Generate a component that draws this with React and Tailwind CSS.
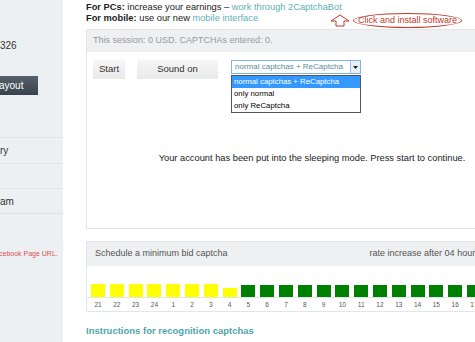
import React from 'react';

const hours = [21, 22, 23, 24, 1, 2, 3, 4, 5, 6, 7, 8, 9, 10, 11, 12, 13, 14, 15, 16, 17, 18, 19, 20];

const barFor = (h, idx) => {
  if (idx < 7) return 'h-[13px] bg-[#ffff00]';
  if (idx === 7) return 'h-[9px] bg-[#ffff00]';
  return 'h-[12px] bg-[#008000]';
};

const Sidebar = () => (
  <div className="w-[63px] shrink-0 h-[342px] bg-[#edf0f2] overflow-hidden text-[10px] text-[#333]">
    <div className="pt-[38px] h-[76px]">326</div>
    <div className="h-[19px] w-[38px] bg-gradient-to-b from-[#56616b] to-[#38424c] text-white flex items-center">
      <span className="-ml-[1px]">ayout</span>
    </div>
    <div className="h-[42px]" />
    <div className="border-t border-[#dfe3e6] h-[26px] flex items-center">ry</div>
    <div className="border-t border-[#dfe3e6] h-[25px]" />
    <div className="border-t border-[#dfe3e6] h-[25px] flex items-center">am</div>
    <div className="border-t border-[#dfe3e6] h-[36px]" />
    <div className="text-[7px] text-[#d9534f] -ml-[1px]">cebook Page URL.</div>
  </div>
);

const App = () => {
  return (
    <div className="w-[475px] h-[342px] overflow-hidden bg-white flex" style={{ fontFamily: '"Liberation Sans", Arial, sans-serif' }}>
      <Sidebar />
      <div className="ml-[23px] w-[452px] shrink-0 relative">
        <div className="text-[9.3px] leading-[11px] text-[#222] pt-[2px]">
          <div><b>For PCs:</b> increase your earnings – <span className="text-[#5fb0b5]">work through 2CaptchaBot</span></div>
          <div><b>For mobile:</b> use our new <span className="text-[#5fb0b5]">mobile interface</span></div>
        </div>

        {/* annotation */}
        <div className="absolute left-[244px] top-[13px] flex items-center gap-[3px]">
          <svg width="20" height="13" viewBox="0 0 20 13">
            <path d="M10 1 L19 7 L14 7 L14 12 L6 12 L6 7 L1 7 Z" fill="none" stroke="#c0392b" strokeWidth="1" />
          </svg>
          <div className="w-[109px] h-[15px] rounded-[50%] border border-[#c0392b] flex items-center justify-center text-[9px] text-[#c0392b]">
            Click and install software
          </div>
        </div>

        <div className="mt-[5px] border border-[#e3e6e8] h-[200px]">
          <div className="h-[22px] bg-[#eef0f1] flex items-center px-[6px] text-[9px] text-[#9a9a9a]">
            This session: 0 USD. CAPTCHAs entered: 0.
          </div>
          <div className="flex items-start pl-[6px] pt-[8px]">
            <div className="w-[32px] h-[19px] bg-gradient-to-b from-[#f6f6f6] to-[#e9e9e9] flex items-center justify-center text-[9.5px] text-[#333]">Start</div>
            <div className="ml-[12px] w-[81px] h-[19px] bg-gradient-to-b from-[#f6f6f6] to-[#e9e9e9] flex items-center justify-center text-[9.5px] text-[#333]">Sound on</div>
            <div className="ml-[13px] w-[130px]">
              <div className="h-[14px] border border-[#7eb4ea] flex items-center text-[8px] text-[#5a8f99]">
                <span className="pl-[3px] flex-1">normal captchas + ReCaptcha</span>
                <span className="w-[10px] h-[12px] border-l border-[#9cc3ea] bg-[#e8eef5] flex items-center justify-center">
                  <svg width="5" height="3" viewBox="0 0 5 3"><path d="M0 0 H5 L2.5 3 Z" fill="#222" /></svg>
                </span>
              </div>
              <div className="mt-[1px] border border-[#555] text-[7.8px] text-black leading-[12px]">
                <div className="bg-[#3399ff] text-white pl-[2px]">normal captchas + ReCaptcha</div>
                <div className="pl-[2px]">only normal</div>
                <div className="pl-[2px]">only ReCaptcha</div>
              </div>
            </div>
          </div>
          <div className="mt-[39px] text-center text-[9.3px] text-[#222]">
            Your account has been put into the sleeping mode. Press start to continue.
          </div>
        </div>

        <div className="mt-[12px] border border-[#e3e6e8]">
          <div className="h-[24px] bg-[#eef0f1] flex items-center pl-[8px] text-[9px] text-[#555] whitespace-nowrap">
            <span>Schedule a minimum bid captcha</span>
            <span className="ml-[142px]">rate increase after 04 hours</span>
          </div>
          <div className="h-[31px] flex items-end pl-[4px] gap-[4.8px]">
            {hours.map((h, idx) => (
              <div key={h} className={`w-[14px] shrink-0 ${barFor(h, idx)}`} />
            ))}
          </div>
          <div className="h-[14px] border-t border-[#e3e6e8] flex items-center pl-[4px] gap-[4.8px] text-[6.5px] text-[#555]">
            {hours.map((h) => (
              <div key={h} className="w-[14px] shrink-0 text-center">{h}</div>
            ))}
          </div>
        </div>

        <div className="mt-[12px] text-[9.5px] font-bold text-[#4fa6ae]">Instructions for recognition captchas</div>
      </div>
    </div>
  );
};

export default App;
